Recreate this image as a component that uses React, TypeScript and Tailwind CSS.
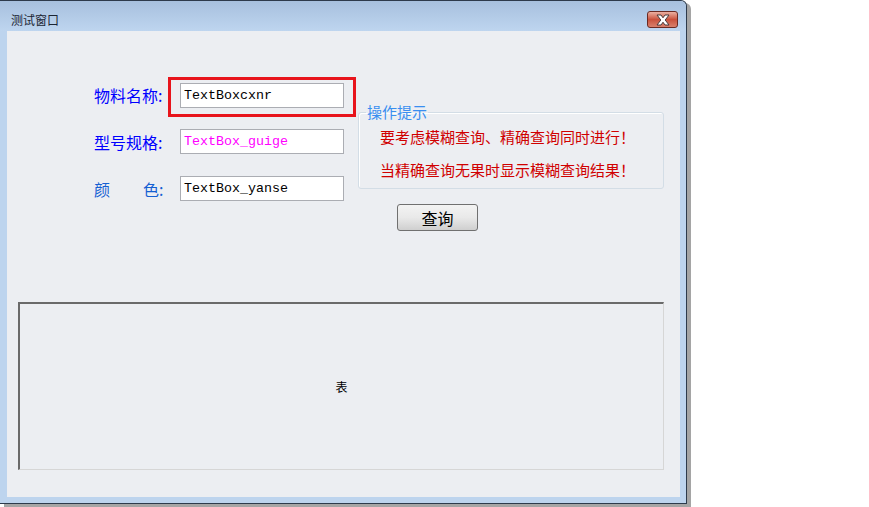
import React from 'react';

const cjk = { fontFamily: '"Noto Sans CJK SC", "Noto Sans", sans-serif' };

function TextBox({ value, color }: { value: string; color: string }) {
  return (
    <div
      className={`w-[164px] h-[25px] border border-[#abadb3] bg-white pl-[3px] flex items-center text-[13.33px] ${color}`}
      style={{ fontFamily: '"Liberation Mono", monospace' }}
    >
      {value}
    </div>
  );
}

function CloseButton() {
  return (
    <div className="w-[31px] h-[17px] rounded-[3px] border border-[#6b2a22] bg-gradient-to-b from-[#eab0a2] via-[#c9513c] to-[#d9806c] flex items-center justify-center">
      <svg width="16" height="12" viewBox="0 0 16 12">
        <path d="M2 1 L6 1 L8 3.8 L10 1 L14 1 L10.2 6 L14 11 L10 11 L8 8.2 L6 11 L2 11 L5.8 6 Z" fill="#ffffff" stroke="#4a3b3b" strokeWidth="1" strokeLinejoin="round" />
      </svg>
    </div>
  );
}

export default function App() {
  return (
    <div className="w-[869px] h-[507px] bg-white" style={cjk}>
      <div className="w-[687px] h-[504px] flex flex-col bg-[#bdd4ee] border-t border-r border-b border-[#2d3a4b] rounded-tr-[6px] shadow-[4px_3px_0_0_#a5a5a5]">
        {/* title bar */}
        <div className="h-[30px] flex items-start justify-between pl-[11px] pr-[8px] pt-[10px] bg-gradient-to-b from-[#a7c0de] to-[#bed5ef] rounded-tr-[6px]">
          <span className="text-[12px] leading-[17px] text-[#1b2533]">测试窗口</span>
          <CloseButton />
        </div>

        {/* client area */}
        <div className="flex-1 pl-[7px] pr-[6px] pb-[6px]">
          <div className="h-full bg-[#eceef2] flex flex-col pt-[46px]">
            <div className="flex items-start">
              {/* fields */}
              <div className="ml-[87px] flex flex-col">
                <div className="flex items-center">
                  <span className="w-[74px] text-[16px] leading-[20px] text-[#0000ff] pb-[4px]">物料名称:</span>
                  <div className="w-[188px] h-[40px] border-[3px] border-[#e8141c] pl-[9px] pt-[3px]">
                    <TextBox value="TextBoxcxnr" color="text-black" />
                  </div>
                </div>
                <div className="flex items-center mt-[12px]">
                  <span className="w-[86px] text-[16px] leading-[20px] text-[#0000ff]">型号规格:</span>
                  <TextBox value="TextBox_guige" color="text-[#ff00ff]" />
                </div>
                <div className="flex items-center mt-[22px]">
                  <span className="w-[86px] flex text-[16px] leading-[20px] text-[#1560d2]">
                    <span>颜</span>
                    <span className="ml-[33px]">色:</span>
                  </span>
                  <TextBox value="TextBox_yanse" color="text-black" />
                </div>
              </div>

              {/* hints + search */}
              <div className="ml-[2px] mt-[25px] flex flex-col">
                <fieldset className="w-[306px] h-[87px] border border-[#d3dde6] rounded-[3px] pl-[7px] shadow-[inset_1px_1px_0_#ffffff]">
                  <legend className="px-[1px] text-[15px] leading-[20px] text-[#3a8ef0]">操作提示</legend>
                  <div className="flex flex-col gap-[13px] pt-[5px] pl-[14px] text-[15px] leading-[20px] text-[#d00000]">
                    <span>要考虑模糊查询、精确查询同时进行！</span>
                    <span>当精确查询无果时显示模糊查询结果！</span>
                  </div>
                </fieldset>
                <button className="ml-[39px] mt-[15px] w-[81px] h-[27px] rounded-[3px] border border-[#707070] bg-gradient-to-b from-[#f3f3f3] via-[#e9e9e9] to-[#cfcfcf] text-[16px] leading-[20px] text-black flex items-center justify-center">
                  查询
                </button>
              </div>
            </div>

            {/* grid placeholder */}
            <div className="ml-[11px] mt-[71px] w-[646px] h-[168px] border-t-2 border-l-2 border-b border-r border-t-[#6a6a6a] border-l-[#6a6a6a] border-b-[#d6d6d6] border-r-[#d6d6d6] flex items-center justify-center">
              <span className="text-[12px] leading-[14px] text-black">表</span>
            </div>
          </div>
        </div>
      </div>
    </div>
  );
}
